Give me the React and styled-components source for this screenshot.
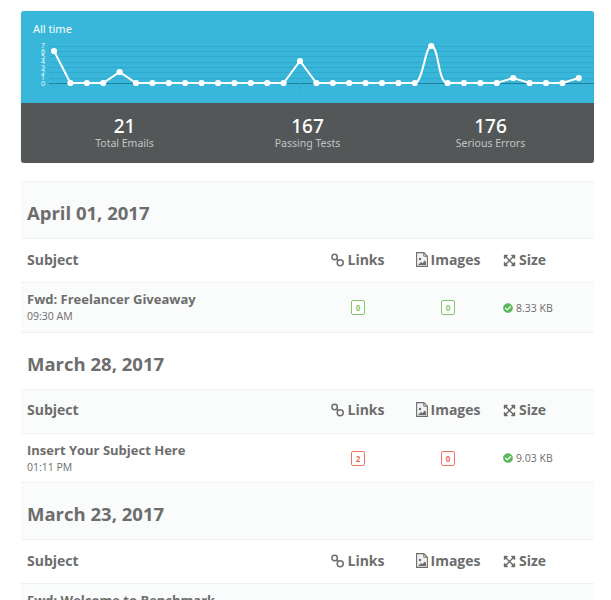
import React from 'react'
import styled, { createGlobalStyle } from 'styled-components'
import { FaExpandArrowsAlt, FaCheckCircle } from 'react-icons/fa'

const GlobalStyle = createGlobalStyle`
    html, body {
        margin: 0;
        padding: 0;
        background: #fff;
    }
    body {
        font-family: "Open Sans", "Noto Sans", sans-serif;
        color: #6d6d6d;
    }
`;

const Page = styled.div`
    width: 573px;
    height: 600px;
    padding: 11px 17px 0 21px;
    overflow: hidden;
`;

const Card = styled.section`
    border-radius: 3px;
    overflow: hidden;
    box-shadow: 0 0 1px rgba(0, 0, 0, 0.3);
`;

const ChartPanel = styled.div`
    height: 92px;
    background-color: #38b7da;
`;

const ChartTitle = styled.div`
    padding: 10px 12px 0;
    height: 18px;
    font-family: "Noto Sans", sans-serif;
    font-size: 11px;
    line-height: 15px;
    color: #fff;
`;

const ChartSvg = styled.svg`
    display: block;
`;

const StatsBar = styled.div`
    display: grid;
    grid-template-columns: repeat(3, 1fr);
    height: 60px;
    padding: 0 12px;
    background-color: #545758;
`;

const Stat = styled.div`
    padding-top: 12px;
    text-align: center;
    font-family: "Noto Sans", sans-serif;
`;

const StatValue = styled.div`
    font-size: 19px;
    line-height: 22px;
    font-weight: 500;
    color: #fff;
`;

const StatLabel = styled.div`
    font-size: 10.5px;
    line-height: 13px;
    color: #c2c4c4;
`;

const Table = styled.table`
    width: 573px;
    margin-top: 18px;
    table-layout: fixed;
    border-collapse: collapse;

    tr {
        border-top: 1px solid #f0f2f2;
        border-bottom: 1px solid #f0f2f2;
    }
    tr:nth-child(odd) {
        background-color: #fafbfb;
    }
`;

const DateCell = styled.td`
    height: 51px;
    padding: 5px 6px 0;
    font-size: 18.5px;
    font-weight: 700;
    color: #6d6d6d;
`;

const HeadCell = styled.th`
    height: 40px;
    padding: ${(props) => (props.$align === 'left' ? '0 0 3px 10px' : '0 0 3px')};
    text-align: ${(props) => (props.$align === 'left' ? 'left' : 'center')};
    font-size: 14px;
    font-weight: 700;
    color: #6d6d6d;

    &:first-child {
        padding-left: 6px;
    }

    svg {
        vertical-align: -2px;
        margin-right: 3px;
    }
`;

const Cell = styled.td`
    height: 47.5px;
    padding: ${(props) => (props.$align === 'left' ? '1px 0 0 10px' : '1px 0 0')};
    text-align: ${(props) => (props.$align === 'center' ? 'center' : 'left')};
    font-size: 10.5px;
    color: #6d6d6d;

    &:first-child {
        padding-left: 6px;
    }
`;

const Subject = styled.div`
    font-size: 13px;
    line-height: 17px;
    font-weight: 700;
`;

const Time = styled.div`
    font-size: 10.5px;
    line-height: 16px;
`;

const Badge = styled.span`
    display: inline-block;
    width: 14px;
    height: 15px;
    line-height: 13px;
    box-sizing: border-box;
    border: 1px solid ${(props) => (props.$bad ? '#f0735f' : '#85c86c')};
    border-radius: 2px;
    background: #fff;
    font-size: 8px;
    font-weight: 700;
    text-align: center;
    color: ${(props) => (props.$bad ? '#ef6a58' : '#85c86c')};
`;

const SizeCheck = styled(FaCheckCircle)`
    color: #5cb85c;
    font-size: 10px;
    vertical-align: -1px;
    margin-right: 3px;
`;

// y position of each point on the chart, 0 emails sits on y=44
const BASE = 44;
const peaks = { 0: 12, 4: 33, 15: 22, 23: 7, 28: 39, 32: 39 };
const points = Array.from({ length: 33 }, (_, i) => ({
    x: 33 + i * 16.4,
    y: peaks[i] ?? BASE,
}));

const linePath = points.reduce((d, p, i) => {
    if (i === 0) return `M${p.x} ${p.y}`;
    const prev = points[i - 1];
    // the tall spike is rounded, the others are straight
    if (i === 23 || i === 24) {
        const mid = (prev.x + p.x) / 2;
        return `${d} C${mid} ${prev.y} ${mid + (i === 23 ? 2 : -2)} ${p.y} ${p.x} ${p.y}`;
    }
    return `${d} L${p.x} ${p.y}`;
}, '');

const gridLines = [7, 12, 17, 23, 28, 33, 39];
const axisLabels = [0, 1, 2, 3, 4, 5, 6, 7];
const ticks = [0, 5, 10, 15, 20, 25, 30];

const Chart = () => (
    <ChartSvg width="573" height="64" viewBox="0 0 573 64">
        {gridLines.map((y) => (
            <line key={y} x1="28" x2="582" y1={y + 0.5} y2={y + 0.5} stroke="#32a9ca" strokeWidth="1" />
        ))}
        <line x1="28" x2="582" y1={BASE + 0.5} y2={BASE + 0.5} stroke="#1f7f9b" strokeWidth="1" />
        {ticks.map((i) => (
            <line key={i} x1={points[i].x} x2={points[i].x} y1={BASE} y2={BASE + 7} stroke="#32a9ca" strokeWidth="1" />
        ))}
        {axisLabels.map((n) => (
            <text key={n} x="22" y={BASE + 2.5 - n * 5.3} fontSize="7" fill="#eaf8fc" textAnchor="middle" fontFamily="Noto Sans, sans-serif">
                {n}
            </text>
        ))}
        <path d={linePath} fill="none" stroke="#fff" strokeWidth="2" />
        {points.map((p) => (
            <circle key={p.x} cx={p.x} cy={p.y} r="3.1" fill="#fff" />
        ))}
    </ChartSvg>
);

const LinkIcon = () => (
    <svg width="13" height="14" viewBox="0 0 13 14" fill="none" stroke="#6d6d6d" strokeWidth="1.5">
        <circle cx="3.6" cy="4" r="2.7" />
        <circle cx="9.2" cy="9.8" r="3" />
        <path d="M5.6 5.9l1.6 1.9" />
    </svg>
);

const ImageIcon = () => (
    <svg width="12" height="15" viewBox="0 0 12 15">
        <path d="M.6.6h7.2l3.6 3.6v10.2H.6z" fill="#f1f1f1" stroke="#6d6d6d" strokeWidth="1.1" />
        <path d="M7.8.6v3.6h3.6" fill="none" stroke="#6d6d6d" strokeWidth="1" />
        <circle cx="4" cy="7" r="1.2" fill="#6d6d6d" />
        <path d="M2 13l3-3 1.5 1.2L8.5 8.5 10 10v3z" fill="#6d6d6d" />
    </svg>
);

const sections = [
    { date: 'April 01, 2017', subject: 'Fwd: Freelancer Giveaway', time: '09:30 AM', links: 0, images: 0, size: '8.33 KB' },
    { date: 'March 28, 2017', subject: 'Insert Your Subject Here', time: '01:11 PM', links: 2, images: 0, size: '9.03 KB', bad: true },
    { date: 'March 23, 2017', subject: 'Fwd: Welcome to Benchmark', time: '11:02 AM', links: 0, images: 0, size: '7.40 KB' },
];

const App = () => {
    return (
        <>
            <GlobalStyle />
            <Page>
                <Card>
                    <ChartPanel>
                        <ChartTitle>All time</ChartTitle>
                        <Chart />
                    </ChartPanel>
                    <StatsBar>
                        <Stat>
                            <StatValue>21</StatValue>
                            <StatLabel>Total Emails</StatLabel>
                        </Stat>
                        <Stat>
                            <StatValue>167</StatValue>
                            <StatLabel>Passing Tests</StatLabel>
                        </Stat>
                        <Stat>
                            <StatValue>176</StatValue>
                            <StatLabel>Serious Errors</StatLabel>
                        </Stat>
                    </StatsBar>
                </Card>
                <Table>
                    <colgroup>
                        <col width="292" />
                        <col width="90" />
                        <col width="90" />
                        <col width="101" />
                    </colgroup>
                    <tbody>
                        {sections.map((s) => (
                            <React.Fragment key={s.date}>
                                <tr>
                                    <DateCell colSpan={4}>{s.date}</DateCell>
                                </tr>
                                <tr>
                                    <HeadCell $align="left">Subject</HeadCell>
                                    <HeadCell><LinkIcon />Links</HeadCell>
                                    <HeadCell><ImageIcon />Images</HeadCell>
                                    <HeadCell $align="left"><FaExpandArrowsAlt size={13} />Size</HeadCell>
                                </tr>
                                <tr>
                                    <Cell>
                                        <Subject>{s.subject}</Subject>
                                        <Time>{s.time}</Time>
                                    </Cell>
                                    <Cell $align="center"><Badge $bad={s.bad}>{s.links}</Badge></Cell>
                                    <Cell $align="center"><Badge $bad={s.bad}>{s.images}</Badge></Cell>
                                    <Cell $align="left"><SizeCheck />{s.size}</Cell>
                                </tr>
                            </React.Fragment>
                        ))}
                    </tbody>
                </Table>
            </Page>
        </>
    )
}

export default App
